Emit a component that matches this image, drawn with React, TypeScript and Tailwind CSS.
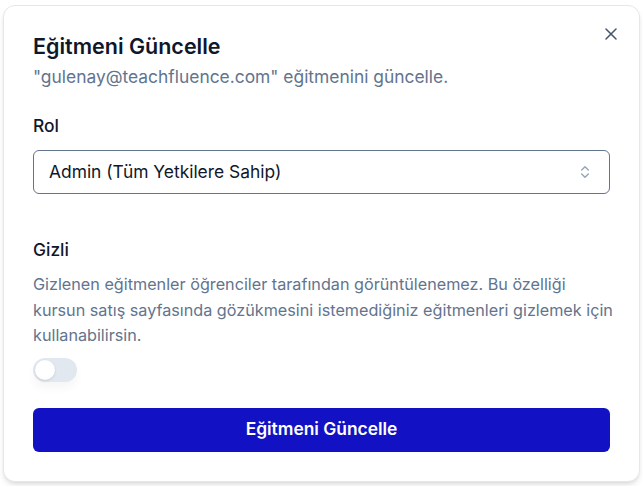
import React from "react";

export default function App() {
  return (
    <div
      className="w-[643px] h-[486px] bg-white p-[3px] pt-[5px]"
      style={{ fontFamily: "Inter, 'Noto Sans', sans-serif" }}
    >
      <div className="relative w-[637px] h-[477px] rounded-xl border border-slate-200 bg-white shadow-md px-[29px] pt-[26px]">
        <button className="absolute left-[601px] top-[22px] text-slate-600">
          <svg width="12" height="12" viewBox="0 0 12 12" fill="none" stroke="currentColor" strokeWidth="1.5" strokeLinecap="round">
            <path d="M1 1 11 11" />
            <path d="M11 1 1 11" />
          </svg>
        </button>
        <h2 className="text-[21.5px] leading-[28px] font-semibold text-slate-900">Eğitmeni Güncelle</h2>
        <p className="mt-[4px] text-[17.4px] leading-[26px] text-slate-500">"gulenay@teachfluence.com" eğitmenini güncelle.</p>

        <div className="mt-[23px] text-[17.4px] leading-[26px] font-medium text-slate-900">Rol</div>
        <div className="mt-[11px] h-[44px] rounded-md border border-slate-500 flex items-center justify-between pl-[15px] pr-[16px] text-[17.4px] text-slate-900">
          <span>Admin (Tüm Yetkilere Sahip)</span>
          <svg width="16" height="16" viewBox="0 0 24 24" fill="none" stroke="#94a3b8" strokeWidth="2" strokeLinecap="round" strokeLinejoin="round">
            <path d="m7 15 5 5 5-5" />
            <path d="m7 9 5-5 5 5" />
          </svg>
        </div>

        <div className="mt-[43px] text-[17.4px] leading-[26px] font-medium text-slate-900">Gizli</div>
        <p className="mt-[9px] text-[16.2px] leading-[25.5px] text-slate-500 whitespace-nowrap">
          Gizlenen eğitmenler öğrenciler tarafından görüntülenemez. Bu özelliği
          <br />
          kursun satış sayfasında gözükmesini istemediğiniz eğitmenleri gizlemek için
          <br />
          kullanabilirsin.
        </p>
        <div className="mt-[9px] w-11 h-6 rounded-full bg-slate-200 p-[2px] shadow-[0_6px_10px_rgba(0,0,0,0.04)]">
          <div className="w-5 h-5 rounded-full bg-white shadow" />
        </div>

        <button className="mt-[26px] w-full h-[44px] rounded-md bg-[#1212c4] text-white text-[17.4px] font-semibold">
          Eğitmeni Güncelle
        </button>
      </div>
    </div>
  );
}
